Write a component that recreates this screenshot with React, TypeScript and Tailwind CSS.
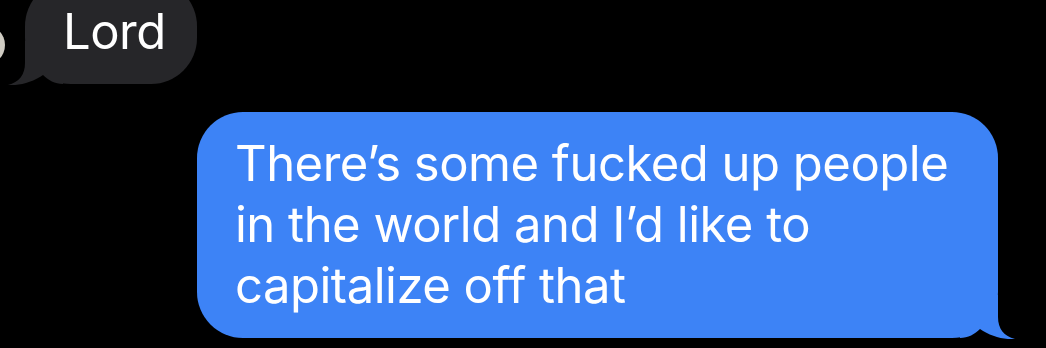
const TAIL = 'M38 0 L38 22 C38 34 44 41 55 44 C44 45 30 41 20 34 C15 39 8 43 0 43 L0 0 Z';

function Tail({ color, flip }: { color: string; flip?: boolean }) {
  return (
    <svg
      width="55"
      height="44"
      viewBox="0 0 55 44"
      className={
        flip
          ? 'absolute left-[-17px] bottom-[-1px] -scale-x-100'
          : 'absolute right-[-17px] bottom-[-1px]'
      }
    >
      <path d={TAIL} fill={color} />
    </svg>
  );
}

export default function App() {
  return (
    <div className="w-[1046px] h-[348px] bg-black overflow-hidden font-['Inter',sans-serif] text-white text-[49px] leading-[61px] tracking-[-0.5px]">
      {/* incoming */}
      <div className="flex items-end mt-[-20px] ml-[-35px] gap-[20px]">
        <div className="w-[40px] h-[40px] mb-[19px] rounded-full bg-[#cfccc3] shrink-0" />
        <div className="relative bg-[#262629] rounded-[46px] pt-[21px] pb-[22px] pl-[38px] pr-[31px]">
          <span className="relative z-10">Lord</span>
          <Tail color="#262629" flip />
        </div>
      </div>

      {/* outgoing */}
      <div className="mt-[28px] ml-[197px]">
        <div className="relative w-[801px] bg-[#3d83f6] rounded-[46px] pt-[21px] pb-[22px] pl-[38px] pr-[30px]">
          <p className="relative z-10">
            There’s some fucked up people
            <br />
            in the world and I’d like to
            <br />
            capitalize off that
          </p>
          <Tail color="#3d83f6" />
        </div>
      </div>
    </div>
  );
}
